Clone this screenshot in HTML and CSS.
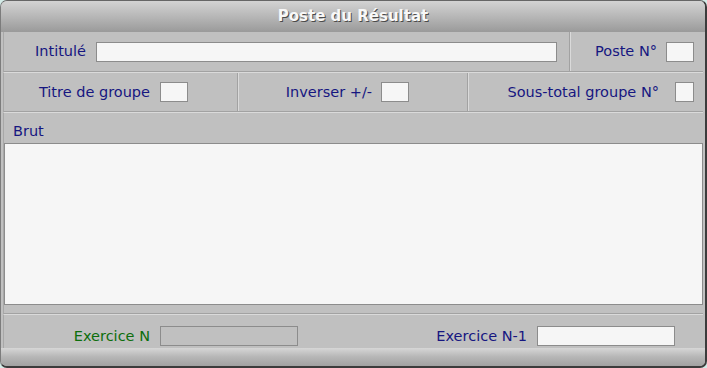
FILE: index.html
```html
<!DOCTYPE html>
<html lang="fr">
<head>
<meta charset="utf-8">
<title>Poste du Résultat</title>
<link rel="stylesheet" href="styles.css">
</head>
<body>
<div class="window">
  <div class="titlebar">Poste du Résultat</div>
  <div class="main">
    <div class="row row1">
      <div class="cell c-intitule">
        <span class="label">Intitulé</span>
        <span class="field f-intitule"></span>
      </div>
      <div class="cell c-poste">
        <span class="label">Poste N°</span>
        <span class="field f-small"></span>
      </div>
    </div>
    <div class="row row2">
      <div class="cell c-titre">
        <span class="label">Titre de groupe</span>
        <span class="field f-small"></span>
      </div>
      <div class="cell c-inverser">
        <span class="label">Inverser +/-</span>
        <span class="field f-small"></span>
      </div>
      <div class="cell c-sous">
        <span class="label">Sous-total groupe N°</span>
        <span class="field f-tiny"></span>
      </div>
    </div>
    <div class="row row3">
      <div class="label brut">Brut</div>
      <div class="memo"></div>
    </div>
    <div class="row footer">
      <div class="fgroup g1">
        <span class="label green">Exercice N</span>
        <span class="field f-wide disabled"></span>
      </div>
      <div class="fgroup g2">
        <span class="label">Exercice N-1</span>
        <span class="field f-wide"></span>
      </div>
    </div>
  </div>
  <div class="bottombar"></div>
</div>
</body>
</html>
```

FILE: styles.css
```css
html, body {
  margin: 0;
  padding: 0;
}
body {
  background: #d3ebe7;
  font-family: "DejaVu Sans", Verdana, sans-serif;
}
.window {
  width: 707px;
  height: 368px;
  box-sizing: border-box;
  border-top: 1px solid #666666;
  border-left: 1px solid #7c7c7c;
  border-right: 2px solid #3c3c3c;
  border-bottom: 2px solid #3c3c3c;
  border-radius: 7px;
  overflow: hidden;
  background: #c0c0c0;
  display: flex;
  flex-direction: column;
}
.titlebar {
  height: 31px;
  flex: none;
  background: linear-gradient(#d3d3d3, #b4b4b4 55%, #9a9a9a);
  color: #f8f8f8;
  font-weight: bold;
  font-size: 15px;
  line-height: 31px;
  text-align: center;
  text-shadow: 1px 1px 0 #4a4a4a;
}
.main {
  flex: none;
  padding: 0 2px;
}
.row {
  box-sizing: border-box;
  border-left: 1px solid #a8a8a8;
}
.row1 {
  height: 40px;
  border-bottom: 1px solid #a2a2a2;
  display: grid;
  grid-template-columns: 566px 1fr;
}
.row2 {
  height: 40px;
  border-top: 1px solid #dadada;
  border-bottom: 1px solid #a2a2a2;
  display: grid;
  grid-template-columns: 234px 230px 1fr;
}
.row3 {
  height: 202px;
  border-top: 1px solid #dadada;
  border-bottom: 1px solid #a2a2a2;
  display: flex;
  flex-direction: column;
}
.footer {
  height: 34px;
  border-top: 1px solid #dadada;
  display: flex;
  align-items: center;
  padding-top: 9px;
}
.cell {
  box-sizing: border-box;
  display: flex;
  align-items: center;
  justify-content: flex-end;
}
.label {
  color: #161680;
  font-size: 14.5px;
  line-height: 17px;
  white-space: nowrap;
}
.green {
  color: #0c6e0c;
}
.field {
  display: block;
  box-sizing: border-box;
  height: 20px;
  background: #f6f6f6;
  border: 1px solid #8c8c8c;
  flex: none;
}
.field.disabled {
  background: #c0c0c0;
}
.f-intitule { width: 461px; }
.f-small { width: 28px; }
.f-tiny { width: 19px; }
.f-wide { width: 138px; }

.c-intitule {
  border-right: 1px solid #a2a2a2;
  padding-right: 12px;
  gap: 10px;
}
.c-poste {
  border-left: 1px solid #dadada;
  padding-right: 9px;
  gap: 9px;
}
.c-titre {
  border-right: 1px solid #a2a2a2;
  padding-right: 49px;
  gap: 10px;
}
.c-inverser {
  border-left: 1px solid #dadada;
  border-right: 1px solid #a2a2a2;
  padding-right: 58px;
  gap: 9px;
}
.c-sous {
  border-left: 1px solid #dadada;
  padding-right: 9px;
  gap: 16px;
}
.brut {
  padding: 10px 0 0 9px;
}
.memo {
  margin-top: 3px;
  height: 162px;
  box-sizing: border-box;
  background: #f6f6f6;
  border: 1px solid #8c8c8c;
}
.fgroup {
  display: flex;
  align-items: center;
  justify-content: flex-end;
  gap: 10px;
}
.g1 { width: 294px; }
.g2 { width: 377px; }
.bottombar {
  flex: 1;
  background: linear-gradient(#d6d6d6, #b6b6b6 50%, #a2a2a2);
}
```
